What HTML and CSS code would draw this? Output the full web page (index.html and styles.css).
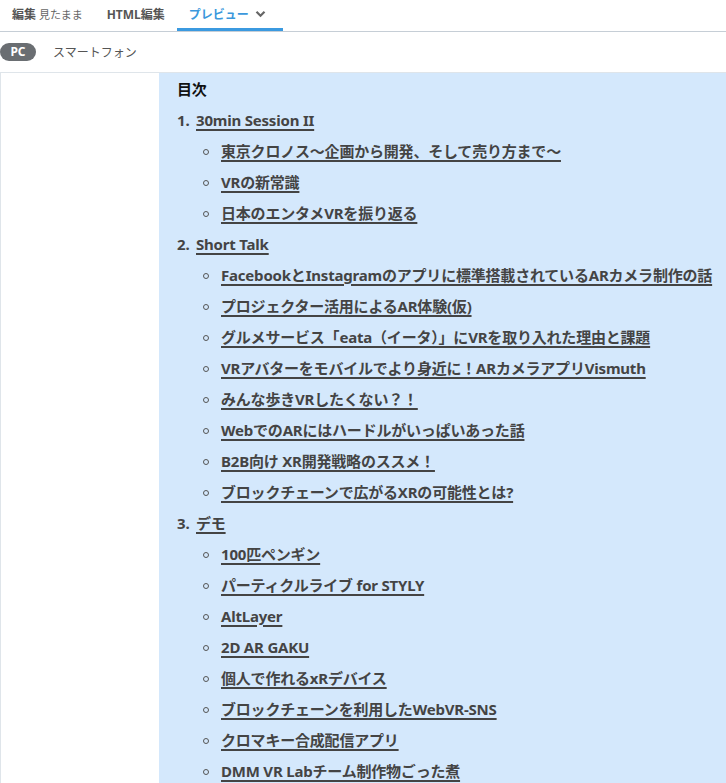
FILE: index.html
```html
<!doctype html>
<html lang="ja">
<head>
    <meta charset="utf-8">
    <title>プレビュー</title>
    <link rel="stylesheet" href="styles.css">
</head>
<body>

<div class="tabs">
    <div class="tab"><b>編集</b> <span class="tab-sub">見たまま</span></div>
    <div class="tab"><b>HTML編集</b></div>
    <div class="tab tab_active">
        <b>プレビュー</b>
        <svg class="chevron" width="11" height="8" viewBox="0 0 11 8"><path d="M1.5 1.8 L5.5 5.8 L9.5 1.8" fill="none" stroke="currentColor" stroke-width="2.2"/></svg>
    </div>
</div>

<div class="devices">
    <span class="device device_active">PC</span>
    <span class="device">スマートフォン</span>
</div>

<div class="preview">
    <div class="preview-side"></div>
    <div class="preview-body">
        <div class="toc-title">目次</div>
        <ol class="toc">
            <li><span class="num">1.</span><a href="#">30min Session II</a>
                <ul>
                    <li><a href="#">東京クロノス〜企画から開発、そして売り方まで〜</a></li>
                    <li><a href="#">VRの新常識</a></li>
                    <li><a href="#">日本のエンタメVRを振り返る</a></li>
                </ul>
            </li>
            <li><span class="num">2.</span><a href="#">Short Talk </a>
                <ul>
                    <li><a href="#">FacebookとInstagramのアプリに標準搭載されているARカメラ制作の話</a></li>
                    <li><a href="#">プロジェクター活用によるAR体験(仮)</a></li>
                    <li><a href="#">グルメサービス「eata（イータ）」にVRを取り入れた理由と課題</a></li>
                    <li><a href="#">VRアバターをモバイルでより身近に！ARカメラアプリVismuth</a></li>
                    <li><a href="#">みんな歩きVRしたくない？！</a></li>
                    <li><a href="#">WebでのARにはハードルがいっぱいあった話</a></li>
                    <li><a href="#">B2B向け XR開発戦略のススメ！</a></li>
                    <li><a href="#">ブロックチェーンで広がるXRの可能性とは?</a></li>
                </ul>
            </li>
            <li><span class="num">3.</span><a href="#">デモ</a>
                <ul>
                    <li><a href="#">100匹ペンギン</a></li>
                    <li><a href="#">パーティクルライブ for STYLY</a></li>
                    <li><a href="#">AltLayer</a></li>
                    <li><a href="#">2D AR GAKU</a></li>
                    <li><a href="#">個人で作れるxRデバイス</a></li>
                    <li><a href="#">ブロックチェーンを利用したWebVR-SNS</a></li>
                    <li><a href="#">クロマキー合成配信アプリ</a></li>
                    <li><a href="#">DMM VR Labチーム制作物ごった煮</a></li>
                </ul>
            </li>
        </ol>
    </div>
</div>

</body>
</html>
```

FILE: styles.css
```css
html, body {
    margin: 0;
    padding: 0;
    color: #444;
    background: #fff;
    font-family: "Noto Sans", "Noto Sans CJK JP", sans-serif;
    overflow: hidden;
}

.tabs {
    display: flex;
    height: 31px;
    border-bottom: 1px solid #c6ced6;
}
    .tab {
        display: flex;
        align-items: center;
        gap: 3px;
        white-space: nowrap;
        font-size: 12px;
        color: #555;
        padding: 0 12px;
        height: 31px;
        box-sizing: border-box;
        border-bottom: 3px solid transparent;
    }
    .tab-sub {
        font-size: 11px;
        color: #666;
    }
    .tab_active {
        color: #3b98dc;
        border-bottom-color: #3b9ae0;
        padding-right: 17px;
        gap: 6px;
    }
        .chevron {
            color: #666;
        }

.devices {
    display: flex;
    align-items: center;
    gap: 17px;
    height: 40px;
    font-size: 12px;
    color: #555;
}
    .device_active {
        background: #6a6e72;
        color: #fff;
        font-weight: bold;
        height: 18px;
        line-height: 18px;
        width: 36px;
        text-align: center;
        border-radius: 9px;
    }

.preview {
    display: flex;
    border-top: 1px solid #dfe5ea;
    height: 720px;
}
    .preview-side {
        width: 158px;
        border-left: 1px solid #dfe5ea;
        background: #fff;
    }
    .preview-body {
        flex: 1;
        background: #d4e8fc;
        padding: 1px 0 0 18px;
        font-size: 15px;
        font-weight: bold;
        line-height: 31px;
        letter-spacing: -0.2px;
    }

.toc-title {
    color: #111;
}

.toc, .toc ul {
    list-style: none;
    margin: 0;
    padding: 0;
}
    .toc .num {
        display: inline-block;
        width: 19px;
        color: #444;
    }
    .toc ul {
        padding-left: 26px;
    }
        .toc ul li::before {
            content: "";
            display: inline-block;
            width: 4px;
            height: 4px;
            border: 1px solid #555;
            border-radius: 50%;
            margin: 0 12px 2px 0;
            vertical-align: middle;
        }
    .toc a {
        color: #444;
        text-decoration: underline;
        text-decoration-thickness: 1.5px;
        text-underline-offset: 3px;
    }
```
